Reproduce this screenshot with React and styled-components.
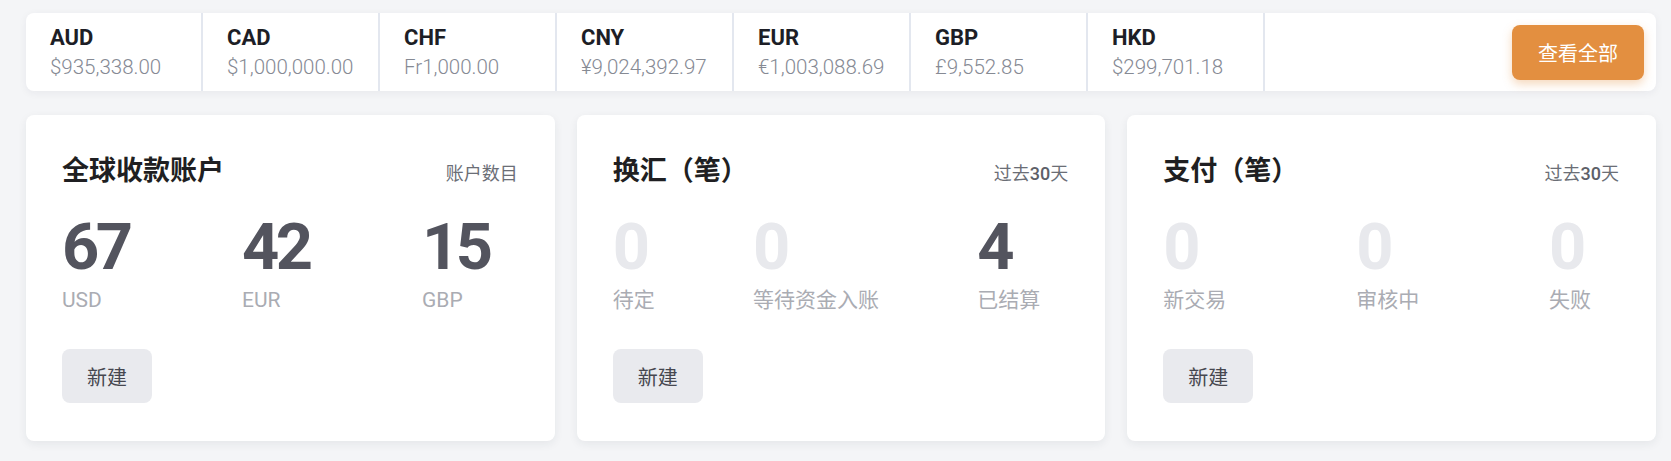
import React from 'react';
import styled, { createGlobalStyle } from 'styled-components';

const GlobalStyle = createGlobalStyle`
  html, body {
    margin: 0;
    padding: 0;
    background: #f4f5f7;
  }
  body {
    font-family: Roboto, "Noto Sans CJK SC", sans-serif;
    -webkit-font-smoothing: antialiased;
  }
`;

const Page = styled.div`
  padding: 13px 15px 20px 26px;
  display: flex;
  flex-direction: column;
  gap: 24px;
`;

const BalanceBar = styled.div`
  display: flex;
  align-items: stretch;
  background: #fff;
  border-radius: 8px;
  box-shadow: 0 2px 8px rgba(30, 40, 60, 0.06);
  height: 78px;
`;

const BalanceCell = styled.div`
  width: 177px;
  padding: 12px 0 0 24px;
  box-sizing: border-box;
  border-right: 2px solid #e3e7ef;
  display: flex;
  flex-direction: column;
  gap: 4px;
`;

const Code = styled.div`
  font-size: 22px;
  line-height: 25px;
  font-weight: 700;
  color: #1d1e26;
`;

const Amount = styled.div`
  font-size: 20.5px;
  line-height: 26px;
  font-weight: 300;
  color: #868a94;
`;

const BarSpacer = styled.div`
  flex: 1;
  display: flex;
  align-items: center;
  justify-content: flex-end;
  padding-right: 12px;
`;

const ViewAll = styled.button`
  width: 132px;
  height: 55px;
  border: 0;
  border-radius: 8px;
  background: #e38f40;
  color: #fff;
  font-family: "Noto Sans CJK SC", sans-serif;
  font-size: 20px;
  box-shadow: 0 4px 10px rgba(227, 143, 64, 0.35);
  cursor: pointer;
`;

const CardGrid = styled.div`
  display: grid;
  grid-template-columns: repeat(3, 1fr);
  gap: 22px;
`;

const Card = styled.div`
  background: #fff;
  border-radius: 8px;
  box-shadow: 0 3px 10px rgba(30, 40, 60, 0.07);
  padding: 38px 37px 37px 36px;
  height: 326px;
  box-sizing: border-box;
  display: flex;
  flex-direction: column;
`;

const CardHeader = styled.div`
  display: flex;
  justify-content: space-between;
  align-items: baseline;
`;

const Title = styled.h2`
  margin: 0;
  font-family: Roboto, "Noto Sans CJK SC", sans-serif;
  font-size: 27px;
  line-height: 36px;
  font-weight: 700;
  color: #1f1f22;
`;

const Note = styled.span`
  font-size: 18px;
  color: #6b6e76;
`;

const NoteNum = styled.b`
  font-weight: 500;
  color: #5d6068;
`;

const StatRow = styled.div`
  display: flex;
  justify-content: space-between;
  padding-right: 28px;
  margin-top: 25px;
`;

const Stat = styled.div`
  display: flex;
  flex-direction: column;
  gap: 6px;
`;

const Value = styled.div`
  font-size: 65px;
  line-height: 66px;
  font-weight: 700;
  letter-spacing: -3.5px;
  color: ${(p) => (p.$empty ? '#e8e9ed' : '#53545e')};
`;

const Label = styled.div`
  font-size: 21px;
  line-height: 28px;
  color: #aaacb3;
  white-space: nowrap;
`;

const NewButton = styled.button`
  margin-top: 35px;
  align-self: flex-start;
  width: 90px;
  height: 54px;
  border: 0;
  border-radius: 8px;
  background: #e9eaee;
  color: #46474f;
  font-family: "Noto Sans CJK SC", sans-serif;
  font-size: 20px;
  cursor: pointer;
`;

const balances = [
  { code: 'AUD', amount: '$935,338.00' },
  { code: 'CAD', amount: '$1,000,000.00' },
  { code: 'CHF', amount: 'Fr1,000.00' },
  { code: 'CNY', amount: '¥9,024,392.97' },
  { code: 'EUR', amount: '€1,003,088.69' },
  { code: 'GBP', amount: '£9,552.85' },
  { code: 'HKD', amount: '$299,701.18' },
];

const cards = [
  {
    title: '全球收款账户',
    note: <>账户数目</>,
    stats: [
      { value: 67, label: 'USD' },
      { value: 42, label: 'EUR' },
      { value: 15, label: 'GBP' },
    ],
  },
  {
    title: '换汇（笔）',
    note: <>过去<NoteNum>30</NoteNum>天</>,
    stats: [
      { value: 0, label: '待定' },
      { value: 0, label: '等待资金入账' },
      { value: 4, label: '已结算' },
    ],
  },
  {
    title: '支付（笔）',
    note: <>过去<NoteNum>30</NoteNum>天</>,
    stats: [
      { value: 0, label: '新交易' },
      { value: 0, label: '审核中' },
      { value: 0, label: '失败' },
    ],
  },
];

export default function App() {
  return (
    <>
      <GlobalStyle />
      <Page>
        <BalanceBar>
          {balances.map((b) => (
            <BalanceCell key={b.code}>
              <Code>{b.code}</Code>
              <Amount>{b.amount}</Amount>
            </BalanceCell>
          ))}
          <BarSpacer>
            <ViewAll>查看全部</ViewAll>
          </BarSpacer>
        </BalanceBar>

        <CardGrid>
          {cards.map((c) => (
            <Card key={c.title}>
              <CardHeader>
                <Title>{c.title}</Title>
                <Note>{c.note}</Note>
              </CardHeader>
              <StatRow>
                {c.stats.map((s) => (
                  <Stat key={s.label}>
                    <Value $empty={s.value === 0}>{s.value}</Value>
                    <Label>{s.label}</Label>
                  </Stat>
                ))}
              </StatRow>
              <NewButton>新建</NewButton>
            </Card>
          ))}
        </CardGrid>
      </Page>
    </>
  );
}
